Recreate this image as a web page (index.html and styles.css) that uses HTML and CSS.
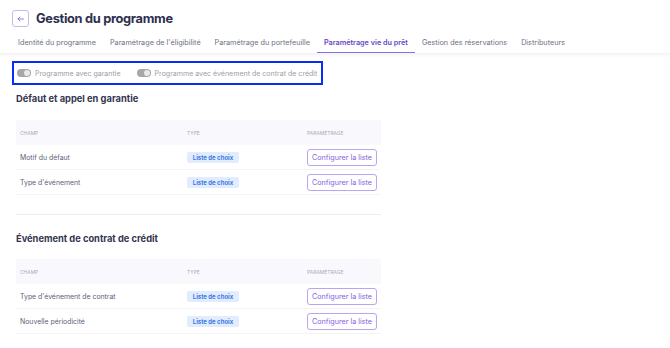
FILE: index.html
```html
<!DOCTYPE html>
<html lang="fr">
<head>
<meta charset="utf-8">
<title>Gestion du programme</title>
<link rel="stylesheet" href="styles.css">
</head>
<body>
<header class="header">
  <button class="back" aria-label="Retour">
    <svg width="7" height="6" viewBox="0 0 7 6"><path d="M6.5 3H1M3 1L1 3l2 2" fill="none" stroke="#8b6ee0" stroke-width="0.9" stroke-linecap="round" stroke-linejoin="round"/></svg>
  </button>
  <h1 class="title">Gestion du programme</h1>
</header>
<nav class="tabs">
  <span class="tab">Identité du programme</span>
  <span class="tab">Paramétrage de l'éligibilité</span>
  <span class="tab">Paramétrage du portefeuille</span>
  <span class="tab active">Paramétrage vie du prêt</span>
  <span class="tab">Gestion des réservations</span>
  <span class="tab">Distributeurs</span>
</nav>
<main class="content">
  <div class="toggles">
    <label class="toggle"><span class="switch"><span class="knob"></span></span>Programme avec garantie</label>
    <label class="toggle"><span class="switch"><span class="knob"></span></span>Programme avec événement de contrat de crédit</label>
  </div>

  <section class="section">
    <h2 class="heading">Défaut et appel en garantie</h2>
    <div class="table">
      <div class="row head"><span class="c1">Champ</span><span class="c2">Type</span><span class="c3">Paramétrage</span></div>
      <div class="row"><span class="c1">Motif du défaut</span><span class="c2"><span class="badge">Liste de choix</span></span><span class="c3"><span class="btn">Configurer la liste</span></span></div>
      <div class="row"><span class="c1">Type d'événement</span><span class="c2"><span class="badge">Liste de choix</span></span><span class="c3"><span class="btn">Configurer la liste</span></span></div>
    </div>
  </section>

  <hr class="divider">

  <section class="section second">
    <h2 class="heading">Événement de contrat de crédit</h2>
    <div class="table">
      <div class="row head"><span class="c1">Champ</span><span class="c2">Type</span><span class="c3">Paramétrage</span></div>
      <div class="row"><span class="c1">Type d'événement de contrat</span><span class="c2"><span class="badge">Liste de choix</span></span><span class="c3"><span class="btn">Configurer la liste</span></span></div>
      <div class="row"><span class="c1">Nouvelle périodicité</span><span class="c2"><span class="badge">Liste de choix</span></span><span class="c3"><span class="btn">Configurer la liste</span></span></div>
    </div>
  </section>
</main>
</body>
</html>
```

FILE: styles.css
```css
* { box-sizing: border-box; }
html, body { margin: 0; background: #fff; }
body {
  font-family: Inter, "Noto Sans", "Liberation Sans", sans-serif;
  color: #50546a;
  width: 670px;
  height: 348px;
  overflow: hidden;
}
.header {
  display: flex;
  align-items: center;
  gap: 7px;
  padding: 10px 12px 0;
  height: 27px;
}
.back {
  width: 17px;
  height: 17px;
  padding: 0;
  border: 1px solid #c9b9f3;
  border-radius: 3px;
  background: #fff;
  display: flex;
  align-items: center;
  justify-content: center;
}
.title {
  margin: 0;
  font-size: 12.8px;
  font-weight: 700;
  color: #2e3050;
  letter-spacing: -0.3px;
}
.tabs {
  display: flex;
  padding: 0 0 0 11px;
  margin-top: 3px;
  height: 24px;
  box-shadow: 0 2px 2px rgba(40, 40, 80, 0.04);
  border-bottom: 1px solid #f4f4f8;
}
.tab {
  padding: 7.5px 7px 0;
  font-size: 7.25px;
  color: #6d7083;
  white-space: nowrap;
}
.tab.active {
  color: #6547c6;
  font-weight: 600;
  border-bottom: 1.5px solid #8b6fe0;
}
.content {
  padding: 0 16px;
}
.toggles {
  display: flex;
  gap: 16px;
  margin: 7px 0 0 -4px;
  width: 311px;
  height: 24px;
  border: 2px solid #0b2df2;
  align-items: center;
  padding-left: 3px;
}
.toggle {
  display: flex;
  align-items: center;
  gap: 4px;
  font-size: 7.05px;
  color: #9b9eab;
  white-space: nowrap;
}
.switch {
  width: 14px;
  height: 8px;
  border-radius: 4px;
  background: #a7a7aa;
  position: relative;
}
.knob {
  position: absolute;
  right: 1px;
  top: 1px;
  width: 6px;
  height: 6px;
  border-radius: 50%;
  background: #e9e9eb;
}
.heading {
  margin: 8px 0 0;
  font-size: 9.3px;
  font-weight: 700;
  color: #33354f;
  height: 12px;
  line-height: 12px;
}
.table {
  margin-top: 15px;
  width: 365px;
}
.row {
  display: flex;
  align-items: center;
  height: 25px;
  border-bottom: 1px solid #f3f3f6;
  font-size: 6.9px;
  color: #5e6275;
}
.row.head {
  background: #f9f9fd;
  border-bottom: none;
  font-size: 4.8px;
  text-transform: uppercase;
  color: #a6a8b6;
  letter-spacing: 0.1px;
}
.c1 { width: 171px; padding-left: 4px; }
.c2 { width: 120px; }
.c3 { flex: 1; }
.badge {
  display: inline-block;
  width: 52px;
  height: 11px;
  line-height: 11px;
  text-align: center;
  background: #e1edfd;
  color: #3a78e6;
  font-size: 6px;
  font-weight: 700;
  border-radius: 2px;
}
.btn {
  display: inline-flex;
  align-items: center;
  justify-content: center;
  width: 70px;
  height: 17px;
  border: 1px solid #baa5f1;
  border-radius: 3px;
  color: #8660df;
  font-size: 7.2px;
  white-space: nowrap;
}
.divider {
  margin: 19px 0 0;
  width: 365px;
  border: none;
  border-top: 1px solid #ececf1;
}
.second .heading { margin-top: 18px; }
.second .table { margin-top: 14px; }
```
